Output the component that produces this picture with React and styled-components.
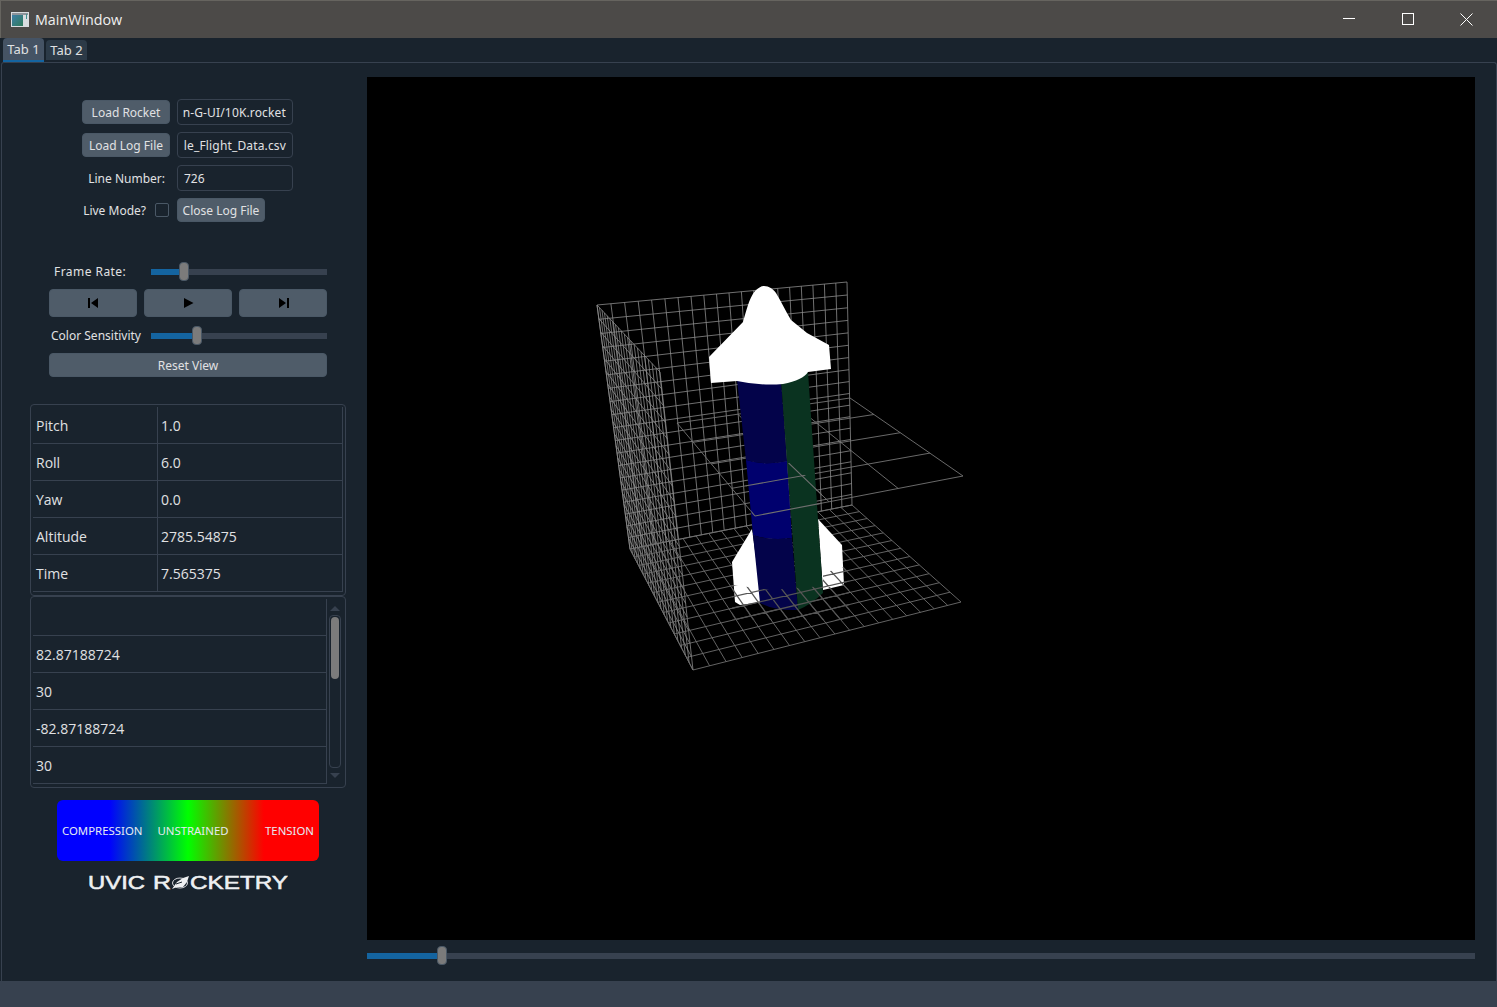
import React from 'react'
import styled, { createGlobalStyle } from 'styled-components'

const GlobalStyle = createGlobalStyle`
  html, body {
    margin: 0;
    padding: 0;
    height: 100%;
    background: #19232d;
    overflow: hidden;
  }
  body {
    font-family: "Noto Sans", "Liberation Sans", sans-serif;
    font-size: 12px;
    color: #e0e1e3;
  }
`

const Page = styled.div`
  display: flex;
  flex-direction: column;
  width: 1497px;
  height: 1007px;
`

const TitleBar = styled.div`
  display: flex;
  align-items: center;
  flex: none;
  height: 38px;
  box-sizing: border-box;
  border-top: 1px solid #66645f;
  border-left: 1px solid #66645f;
  background: #4c4a48;
  padding-left: 10px;
`

const TitleText = styled.span`
  margin-left: 6px;
  font-family: "Open Sans", sans-serif;
  font-size: 14.3px;
  color: #f0f0f0;
`

const WindowButtons = styled.div`
  display: flex;
  align-self: flex-start;
  margin-left: auto;
  margin-right: 1px;
`

const WindowButton = styled.div`
  display: flex;
  align-items: center;
  justify-content: center;
  width: 59px;
  height: 36px;
`

const TabBar = styled.div`
  display: flex;
  align-items: flex-start;
  flex: none;
  height: 24px;
  padding-left: 3px;
  gap: 2px;
`

const Tab = styled.div`
  display: flex;
  align-items: center;
  justify-content: center;
  box-sizing: border-box;
  width: 41px;
  height: ${p => (p.$active ? '24px' : '20px')};
  margin-top: ${p => (p.$active ? '0' : '2px')};
  background: ${p => (p.$active ? '#455364' : '#2c3a47')};
  border-bottom: ${p => (p.$active ? '2px solid #1464a0' : 'none')};
  border-radius: 4px 4px 0 0;
  font-size: 13px;
`

const Panel = styled.div`
  display: flex;
  flex: 1;
  min-height: 0;
  margin-left: 1px;
  box-sizing: border-box;
  border: 1px solid #37414f;
  border-bottom: none;
  border-radius: 3px 3px 0 0;
  padding: 14px 21px 0 28px;
  gap: 21px;
`

const StatusBar = styled.div`
  flex: none;
  height: 26px;
  background: #37414f;
`

const Sidebar = styled.div`
  display: flex;
  flex-direction: column;
  flex: none;
  width: 316px;
  padding-top: 22px;
`

const FileForm = styled.div`
  display: grid;
  grid-template-columns: 88px 116px;
  grid-auto-rows: 26px;
  column-gap: 7px;
  row-gap: 7px;
  margin-left: 52px;
  align-items: center;
`

const Button = styled.button`
  box-sizing: border-box;
  height: ${p => p.$h || 24}px;
  width: ${p => (p.$w ? `${p.$w}px` : '100%')};
  padding: 0;
  display: flex;
  align-items: center;
  justify-content: center;
  border: 1px solid #4a5866;
  border-radius: 4px;
  background: #4f5c69;
  color: #e0e1e3;
  font: inherit;
  align-self: ${p => (p.$top ? 'start' : 'center')};
`

const FieldBox = styled.div`
  box-sizing: border-box;
  height: 26px;
  display: flex;
  align-items: center;
  justify-content: ${p => (p.$clip ? 'flex-end' : 'flex-start')};
  padding: 0 6px 0 6px;
  border: 1px solid #37414f;
  border-radius: 4px;
  overflow: hidden;
  white-space: nowrap;
  letter-spacing: ${p => (p.$clip ? '0.15px' : '0')};
`

const RightLabel = styled.div`
  display: flex;
  align-items: center;
  justify-content: flex-end;
  padding-right: ${p => p.$pad || 0}px;
  padding-bottom: ${p => p.$lift || 0}px;
  gap: 9px;
  white-space: nowrap;
`

const CheckBox = styled.div`
  box-sizing: border-box;
  width: 14px;
  height: 14px;
  border: 1px solid #4a5866;
  border-radius: 2px;
`

const Controls = styled.div`
  display: flex;
  flex-direction: column;
  width: 278px;
  margin: 38px 0 0 19px;
`

const SliderRow = styled.div`
  display: grid;
  grid-template-columns: 102px 176px;
  align-items: center;
  height: 19px;
  margin-top: ${p => p.$top || 0}px;
`

const SliderLabel = styled.span`
  padding-left: ${p => p.$indent}px;
  letter-spacing: ${p => p.$spacing || 0}px;
  white-space: nowrap;
`

const Slider = styled.div`
  display: flex;
  align-items: center;
  height: 19px;
`

const SliderFill = styled.div`
  flex: none;
  width: ${p => p.$width}px;
  height: 6px;
  background: #1464a0;
`

const SliderHandle = styled.div`
  flex: none;
  box-sizing: border-box;
  width: 10px;
  height: 19px;
  background: #7b7b7b;
  border: 1px solid #4a5866;
  border-radius: 4px;
`

const SliderRest = styled.div`
  flex: 1;
  height: 6px;
  background: #37414f;
`

const Transport = styled.div`
  display: grid;
  grid-template-columns: repeat(3, 88px);
  column-gap: 7px;
  margin-top: 8px;
`

const ResetRow = styled.div`
  margin-top: 8px;
`

const TableBox = styled.div`
  display: flex;
  box-sizing: border-box;
  height: 192px;
  margin-top: ${p => p.$top || 0}px;
  padding: 2px 2px 3px;
  border: 1px solid #37414f;
  border-radius: 4px;
  font-family: "Open Sans", sans-serif;
  font-size: 14px;
`

const Rows = styled.div`
  display: flex;
  flex-direction: column;
  flex: 1;
  border-right: 1px solid #37414f;
`

const Row = styled.div`
  display: flex;
  box-sizing: border-box;
  flex: none;
  height: 37px;
  border-bottom: 1px solid #37414f;
`

const KeyCell = styled.div`
  display: flex;
  align-items: center;
  box-sizing: border-box;
  width: 125px;
  padding-left: 3px;
  border-right: 1px solid #37414f;
`

const ValueCell = styled.div`
  display: flex;
  align-items: center;
  padding-left: 3px;
`

const Scrollbar = styled.div`
  display: flex;
  flex-direction: column;
  align-items: center;
  flex: none;
  width: 16px;
  padding-top: 7px;
  box-sizing: border-box;
`

const ArrowUp = styled.div`
  width: 0;
  height: 0;
  border-left: 5px solid transparent;
  border-right: 5px solid transparent;
  border-bottom: 5px solid #37414f;
`

const ArrowDown = styled(ArrowUp)`
  border-bottom: none;
  border-top: 5px solid #37414f;
  margin-top: 5px;
`

const ScrollTrack = styled.div`
  box-sizing: border-box;
  width: 12px;
  height: 153px;
  margin-top: 4px;
  padding: 1px;
  border: 1px solid #37414f;
  border-radius: 4px;
`

const ScrollThumb = styled.div`
  height: 62px;
  background: #7b7b7b;
  border-radius: 4px;
`

const Legend = styled.div`
  display: flex;
  align-items: center;
  width: 262px;
  height: 61px;
  box-sizing: border-box;
  margin: 12px 0 0 27px;
  padding: 0 5px 1px;
  gap: 15px;
  border-radius: 6px;
  background: linear-gradient(90deg, #0000ff 20%, #00ff00 50%, #ff0000 79%);
  font-size: 11.4px;
  color: #e6ebf2;
`

const LegendEnd = styled.span`
  margin-left: auto;
`

const Logo = styled.svg`
  display: block;
  margin: 12px 0 0 58px;
`

const Stage = styled.div`
  display: flex;
  flex-direction: column;
  flex: 1;
  min-width: 0;
`

const Viewport = styled.div`
  width: 1108px;
  height: 863px;
  background: #000;
`

const ViewportSvg = styled.svg`
  display: block;
`

const TimelineWrap = styled.div`
  margin-top: 6px;
`

// projective map of the unit square onto a quad, so the grids get real perspective
function quadMap([p0, p1, p2, p3]) {
  const dx1 = p1[0] - p2[0]
  const dx2 = p3[0] - p2[0]
  const sx = p0[0] - p1[0] + p2[0] - p3[0]
  const dy1 = p1[1] - p2[1]
  const dy2 = p3[1] - p2[1]
  const sy = p0[1] - p1[1] + p2[1] - p3[1]
  const den = dx1 * dy2 - dx2 * dy1
  const g = (sx * dy2 - dx2 * sy) / den
  const h = (dx1 * sy - sx * dy1) / den
  const a = p1[0] - p0[0] + g * p1[0]
  const b = p3[0] - p0[0] + h * p3[0]
  const d = p1[1] - p0[1] + g * p1[1]
  const e = p3[1] - p0[1] + h * p3[1]
  return (u, v) => {
    const w = g * u + h * v + 1
    return [(a * u + b * v + p0[0]) / w, (d * u + e * v + p0[1]) / w]
  }
}

function gridPath(quad, cols, rows) {
  const map = quadMap(quad)
  const seg = (a, b) => `M${a[0].toFixed(1)} ${a[1].toFixed(1)}L${b[0].toFixed(1)} ${b[1].toFixed(1)}`
  let d = ''
  for (let i = 0; i <= cols; i++) d += seg(map(i / cols, 0), map(i / cols, 1))
  for (let j = 0; j <= rows; j++) d += seg(map(0, j / rows), map(1, j / rows))
  return d
}

// all scene coordinates are page pixels, the group below shifts them into the viewport
const backWall = gridPath([[597, 305], [847, 282], [852, 505], [630, 549]], 20, 19)
const sideWall = gridPath([[597, 305], [660, 372], [693, 670], [630, 549]], 20, 20)
const floor = gridPath([[630, 549], [852, 505], [961, 602], [693, 670]], 18, 12)
const midPlane = gridPath([[677, 423], [850, 398], [963, 476], [755, 516]], 3, 4)

const nose = 'M764 286C769 286 773 289 776 293C781 301 786 312 791 320L807 333L829 345L831 369L808 372Q803 380 783 384Q760 386 737 381L711 383L709 357L743 322C746 312 749 298 755 291C758 288 761 286 764 286Z'
const finLeft = 'M752 529L732 562L735 602L740 605L762 602Z'
const finRight = 'M818 519L842 545L844 585L823 590Z'
const bandTop = 'M737 380L781 380L787 461Q765 466 746 460Z'
const bandMid = 'M746 460Q765 466 787 461L792 538Q770 541 753 535Z'
const bandLow = 'M753 535Q770 541 792 538L798 610Q775 611 760 603Z'
const bandGreen = 'M781 380L808 372L823 593Q812 604 798 610Z'

const floorFront = 'M732 585L771 590L823 586L823 573L848 566L850 620L732 620Z'
const midFront = 'M745 483L791 462L822 491L822 507L753 520Z'

const RocketScene = () => (
  <ViewportSvg width="1108" height="863" viewBox="0 0 1108 863">
    <defs>
      <clipPath id="floorFront"><path d={floorFront} /></clipPath>
      <clipPath id="midFront"><path d={midFront} /></clipPath>
    </defs>
    <g transform="translate(-367 -77)">
      <g fill="none" stroke="#8c8c8c" strokeWidth="0.8">
        <path d={backWall} />
        <path d={sideWall} />
      </g>
      <path d={floor} fill="none" stroke="#6e6e6e" strokeWidth="0.9" />
      <path d={midPlane} fill="none" stroke="#757575" strokeWidth="0.9" />
      <path d={finLeft} fill="#fff" />
      <path d={finRight} fill="#fff" />
      <path d={bandTop} fill="#03034a" />
      <path d={bandMid} fill="#00006e" />
      <path d={bandLow} fill="#03034a" />
      <path d={bandGreen} fill="#0a3320" />
      <path d={nose} fill="#fff" />
      <path d={floor} fill="none" stroke="#555" strokeWidth="1.3" clipPath="url(#floorFront)" />
      <path d={midPlane} fill="none" stroke="#6f6f6f" strokeWidth="1.1" clipPath="url(#midFront)" />
    </g>
  </ViewportSvg>
)

const AppIcon = () => (
  <svg width="18" height="15" viewBox="0 0 18 15">
    <defs>
      <linearGradient id="iconFill" x1="0" y1="0" x2="1" y2="1">
        <stop offset="0" stopColor="#3f7fa8" />
        <stop offset="1" stopColor="#2f7a5a" />
      </linearGradient>
    </defs>
    <rect x="0" y="0" width="18" height="15" fill="#d9dce0" />
    <rect x="1" y="1" width="16" height="2" fill="#8d939a" />
    <rect x="1" y="3" width="11" height="11" fill="url(#iconFill)" />
    <rect x="15" y="2" width="1" height="5" fill="#3f8f8f" />
  </svg>
)

const MinimizeIcon = () => (
  <svg width="12" height="12" viewBox="0 0 12 12"><path d="M0 5.5H12" stroke="#fff" /></svg>
)
const MaximizeIcon = () => (
  <svg width="12" height="12" viewBox="0 0 12 12"><rect x=".5" y=".5" width="11" height="11" fill="none" stroke="#fff" /></svg>
)
const CloseIcon = () => (
  <svg width="13" height="13" viewBox="0 0 13 13"><path d="M.5 .5L12.5 12.5M12.5 .5L.5 12.5" stroke="#fff" /></svg>
)

const SkipBack = () => (
  <svg width="11" height="10" viewBox="0 0 11 10"><path d="M0 0H2V10H0ZM10 0V10L3 5Z" fill="#000" /></svg>
)
const Play = () => (
  <svg width="12" height="10" viewBox="0 0 12 10"><path d="M2 0L11.5 5L2 10Z" fill="#000" /></svg>
)
const SkipForward = () => (
  <svg width="11" height="10" viewBox="0 0 11 10"><path d="M11 0H9V10H11ZM1 0V10L8 5Z" fill="#000" /></svg>
)

const RocketLogo = () => (
  <Logo width="200" height="20" viewBox="0 0 200 20">
    <g fill="#eef0f2" stroke="#eef0f2" strokeWidth="0.5" fontFamily="'Liberation Sans', sans-serif" fontSize="17.5">
      <text x="0" y="16" textLength="57" lengthAdjust="spacingAndGlyphs">UVIC</text>
      <text x="65" y="16" textLength="18" lengthAdjust="spacingAndGlyphs">R</text>
      <text x="102" y="16" textLength="98" lengthAdjust="spacingAndGlyphs">CKETRY</text>
    </g>
    <ellipse cx="92" cy="10" rx="7.5" ry="5" fill="none" stroke="#d8dade" strokeWidth="1" />
    <path d="M84 16L89 9L95 5L101 3L99 9L95 14L89 14Z" fill="#eef0f2" />
    <path d="M88 11L94 9" stroke="#19232d" strokeWidth="1" />
  </Logo>
)

const TimeSlider = ({ fill }) => (
  <Slider>
    <SliderFill $width={fill} />
    <SliderHandle />
    <SliderRest />
  </Slider>
)

const readings = [
  ['Pitch', '1.0'],
  ['Roll', '6.0'],
  ['Yaw', '0.0'],
  ['Altitude', '2785.54875'],
  ['Time', '7.565375'],
]

const strains = ['', '82.87188724', '30', '-82.87188724', '30']

export default function App() {
  return (
    <Page>
      <GlobalStyle />
      <TitleBar>
        <AppIcon />
        <TitleText>MainWindow</TitleText>
        <WindowButtons>
          <WindowButton><MinimizeIcon /></WindowButton>
          <WindowButton><MaximizeIcon /></WindowButton>
          <WindowButton><CloseIcon /></WindowButton>
        </WindowButtons>
      </TitleBar>
      <TabBar>
        <Tab $active>Tab 1</Tab>
        <Tab>Tab 2</Tab>
      </TabBar>
      <Panel>
        <Sidebar>
          <FileForm>
            <Button>Load Rocket</Button>
            <FieldBox $clip>n-G-UI/10K.rocket</FieldBox>
            <Button>Load Log File</Button>
            <FieldBox $clip>le_Flight_Data.csv</FieldBox>
            <RightLabel $pad={5}>Line Number:</RightLabel>
            <FieldBox>726</FieldBox>
            <RightLabel $pad={1} $lift={2}>Live Mode?<CheckBox /></RightLabel>
            <Button $top $w={88}>Close Log File</Button>
          </FileForm>
          <Controls>
            <SliderRow>
              <SliderLabel $indent={5} $spacing={0.45}>Frame Rate:</SliderLabel>
              <TimeSlider fill={28} />
            </SliderRow>
            <Transport>
              <Button $h={28}><SkipBack /></Button>
              <Button $h={28}><Play /></Button>
              <Button $h={28}><SkipForward /></Button>
            </Transport>
            <SliderRow $top={9}>
              <SliderLabel $indent={2}>Color Sensitivity</SliderLabel>
              <TimeSlider fill={41} />
            </SliderRow>
            <ResetRow><Button>Reset View</Button></ResetRow>
          </Controls>
          <TableBox $top={27}>
            <Rows>
              {readings.map(([key, value]) => (
                <Row key={key}>
                  <KeyCell>{key}</KeyCell>
                  <ValueCell>{value}</ValueCell>
                </Row>
              ))}
            </Rows>
          </TableBox>
          <TableBox>
            <Rows>
              {strains.map((value, i) => (
                <Row key={i}>
                  <ValueCell>{value}</ValueCell>
                </Row>
              ))}
            </Rows>
            <Scrollbar>
              <ArrowUp />
              <ScrollTrack><ScrollThumb /></ScrollTrack>
              <ArrowDown />
            </Scrollbar>
          </TableBox>
          <Legend>
            <span>COMPRESSION</span>
            <span>UNSTRAINED</span>
            <LegendEnd>TENSION</LegendEnd>
          </Legend>
          <RocketLogo />
        </Sidebar>
        <Stage>
          <Viewport><RocketScene /></Viewport>
          <TimelineWrap><TimeSlider fill={70} /></TimelineWrap>
        </Stage>
      </Panel>
      <StatusBar />
    </Page>
  )
}
